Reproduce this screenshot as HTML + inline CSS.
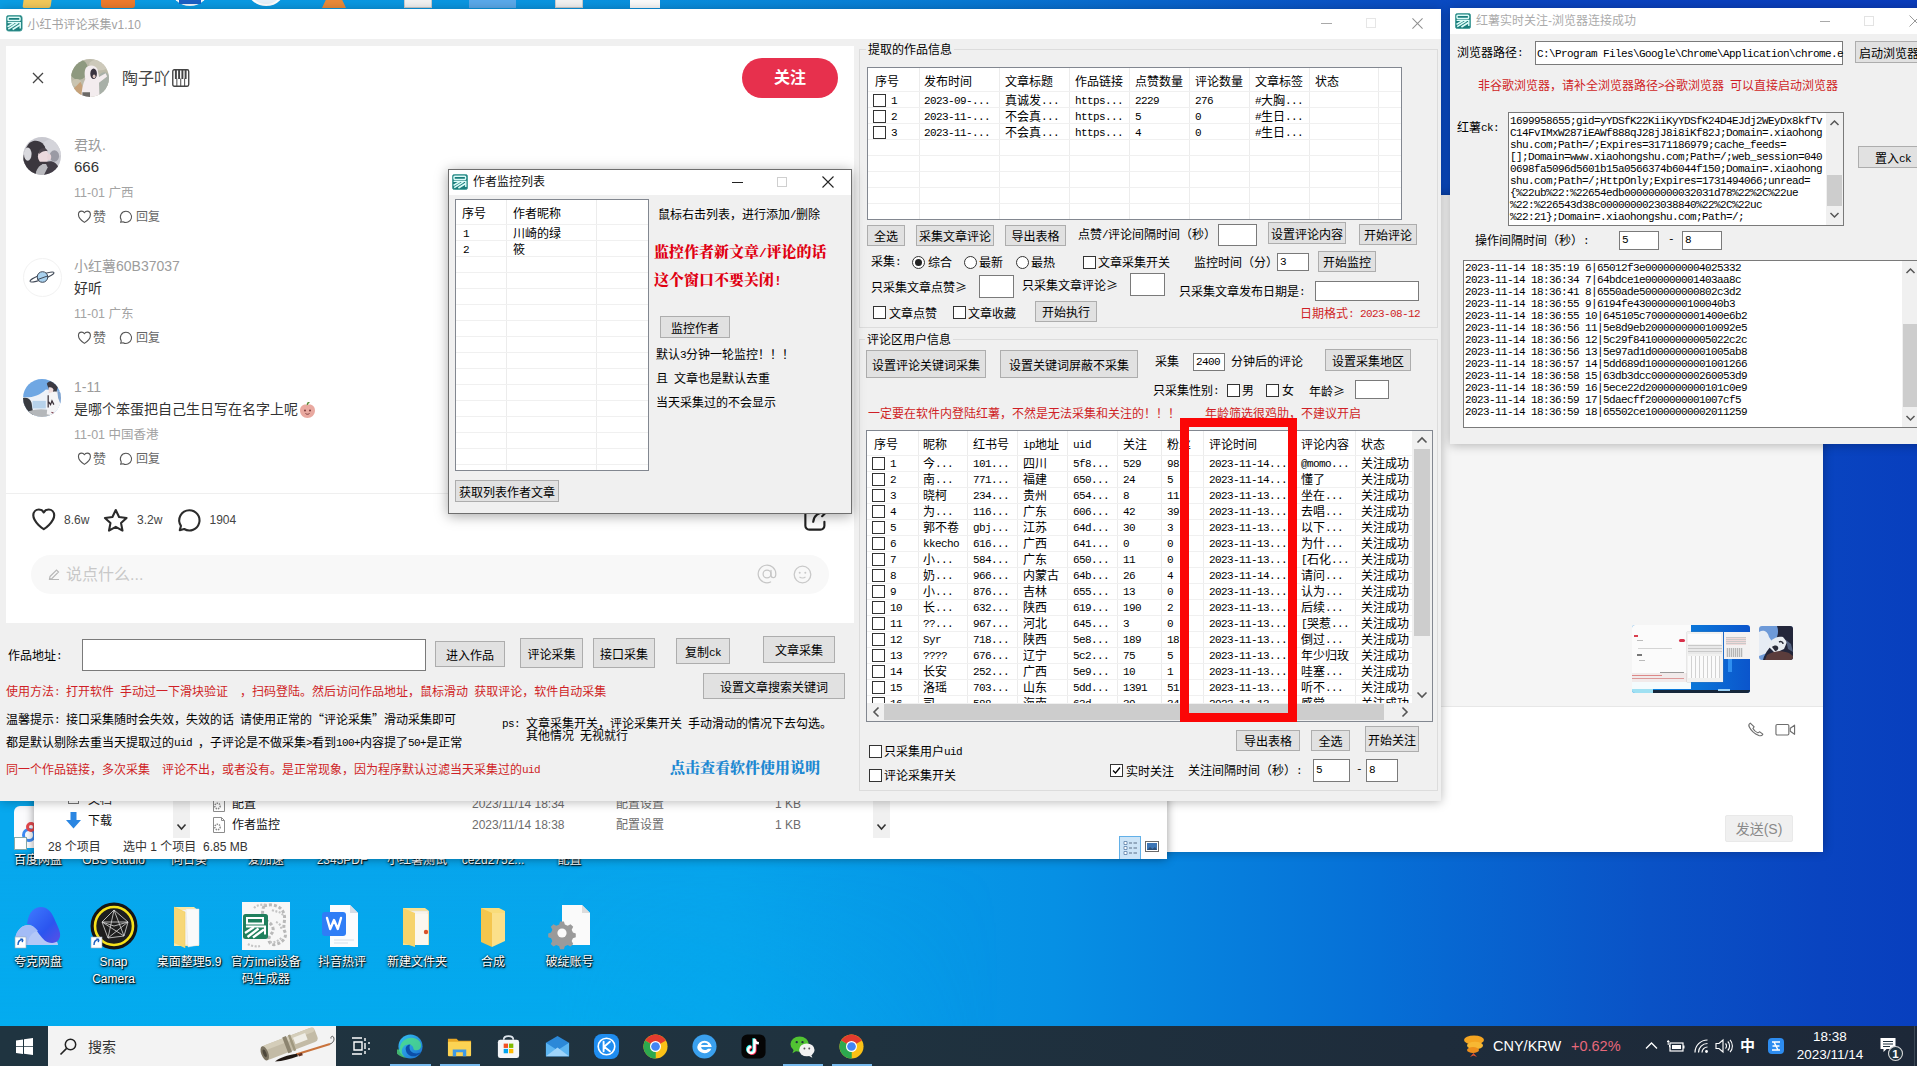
<!DOCTYPE html>
<html lang="zh-CN"><head><meta charset="utf-8"><title>screenshot</title>
<style>
html,body{margin:0;padding:0}
body{width:1917px;height:1066px;overflow:hidden;position:relative;background:#0a8fe2;font-family:"Liberation Sans","Noto Sans CJK SC",sans-serif}
.a{position:absolute}
.t{position:absolute;white-space:nowrap;font:400 12px/16px "Liberation Sans","Noto Sans CJK SC",sans-serif;color:#000}
.s{position:absolute;white-space:nowrap;font:12px/16px "Liberation Sans","Noto Sans CJK SC",sans-serif;color:#333}
.m{position:absolute;white-space:pre;font:11px/12px "Liberation Mono",monospace;letter-spacing:-.6px;color:#000}
.r{color:#cf1f26}
.l{font-family:"Liberation Mono",monospace;font-size:11px;letter-spacing:-.6px;white-space:pre;position:relative;top:-1px}
.g{font-family:"Noto Sans CJK SC",sans-serif;display:inline-block;width:12px;text-align:center}
.btn{position:absolute;box-sizing:border-box;border:1px solid #adadad;background:#e1e1e1;text-align:center;white-space:nowrap;font:400 12px/16px "Liberation Sans","Noto Sans CJK SC",sans-serif;color:#000}
.inp{position:absolute;box-sizing:border-box;border:1px solid #7a7a7a;background:#fff;font:400 12px/16px "Liberation Sans","Noto Sans CJK SC",sans-serif;color:#000;overflow:hidden;white-space:nowrap}
.cb{position:absolute;box-sizing:border-box;width:13px;height:13px;border:1px solid #333;background:#fff}
.rd{position:absolute;box-sizing:border-box;width:13px;height:13px;border:1px solid #333;background:#fff;border-radius:50%}
.lv{position:absolute;box-sizing:border-box;border:1px solid #828790;background:#fff;overflow:hidden}
.win{position:absolute;background:#f0f0f0;box-shadow:0 1px 10px rgba(0,0,0,.28)}
.vl{position:absolute;width:1px;background:#ececec}
.hl{position:absolute;height:1px;background:#f0f0f0}
.dl{position:absolute;white-space:nowrap;font:12px/17px "Liberation Sans","Noto Sans CJK SC",sans-serif;color:#fff;text-align:center;text-shadow:1px 1px 1px rgba(0,0,0,.95),0 1px 3px rgba(0,0,0,.7),0 0 2px rgba(0,0,0,.5)}
</style></head>
<body>
<div class="a" style="left:0;top:0;width:1917px;height:1066px;background:linear-gradient(90deg,#07a8ee 0%,#07a4ec 38%,#0690e4 55%,#066fd6 72%,#0a52c6 86%,#0944c0 95%,#083fbe 100%)"></div>
<div class="a" style="left:0;top:860px;width:1000px;height:206px;background:linear-gradient(180deg,rgba(0,176,240,0) 0%,rgba(0,176,240,.55) 100%);-webkit-mask-image:linear-gradient(90deg,#000 0%,#000 55%,transparent 100%);mask-image:linear-gradient(90deg,#000 0%,#000 55%,transparent 100%)"></div>
<div class="a" style="left:0;top:0;width:1917px;height:200px;background:linear-gradient(90deg,#0a9ee5 0%,#0a94e0 30%,#0879d3 50%,#0a52c4 70%,#0a44c0 80%,#0a3cbc 100%)"></div>
<div class="a" style="left:24px;top:-14px;width:28px;height:22px;background:#f3c95a;border-radius:2px;transform:skewX(-8deg)"></div>
<div class="a" style="left:101px;top:-16px;width:34px;height:24px;background:#ee7b2c;border-radius:3px"></div>
<div class="a" style="left:170px;top:-34px;width:40px;height:40px;background:#f4f6fa;border-radius:50%"></div><div class="a" style="left:179px;top:0;width:22px;height:4px;background:#1c5fc4"></div>
<div class="a" style="left:246px;top:-34px;width:40px;height:40px;background:#e8f1fa;border-radius:50%;border:2px solid #fff;box-sizing:border-box"></div>
<div class="a" style="left:322px;top:-10px;width:24px;height:18px;background:#e98a3a;clip-path:polygon(35% 0,65% 0,100% 100%,0 100%)"></div>
<div class="a" style="left:404px;top:-12px;width:28px;height:20px;background:#f2f2f2;border:1px solid #ccc;box-sizing:border-box"></div>
<div class="a" style="left:469px;top:-30px;width:47px;height:38px;background:#5aa9ea"></div>
<div class="a" style="left:555px;top:-12px;width:28px;height:20px;background:#f2f2f2;border:1px solid #ccc;box-sizing:border-box"></div>
<div class="a" style="left:630px;top:-12px;width:30px;height:20px;background:#fafafa"></div>
<div class="a" style="left:14px;top:806px;width:30px;height:42px;background:#fbfbfd;border-radius:6px"></div>
<div class="a" style="left:22px;top:828px;width:14px;height:14px;border:3px solid #3d8af2;border-radius:50%;box-sizing:border-box"></div>
<div class="a" style="left:26px;top:822px;width:10px;height:10px;border:3px solid #e5484d;border-radius:50%;box-sizing:border-box"></div>
<div class="a" style="left:14px;top:837px;width:11px;height:11px;background:#fff;border:1px solid #8aa"></div>
<div class="dl" style="left:-22px;width:120px;top:852px">百度网盘</div>
<div class="dl" style="left:53.5px;width:120px;top:852px">OBS Studio</div>
<div class="dl" style="left:129px;width:120px;top:852px">向日葵</div>
<div class="dl" style="left:205.8px;width:120px;top:852px">爱加速</div>
<div class="dl" style="left:282px;width:120px;top:852px">2345PDF</div>
<div class="dl" style="left:357px;width:120px;top:852px">小红薯测试</div>
<div class="dl" style="left:433px;width:120px;top:852px">ce2d2752...</div>
<div class="dl" style="left:509.6px;width:120px;top:852px">配置</div>
<svg class="a" style="left:14px;top:902px" width="48" height="48" viewBox="0 0 48 48"><defs><linearGradient id="qk" x1="0" y1="0" x2="1" y2="1"><stop offset="0" stop-color="#3f7bff"/><stop offset=".6" stop-color="#2b55ef"/><stop offset="1" stop-color="#5a4fe6"/></linearGradient></defs><path d="M9 43c-6 0-9-5-7-10 2-6 7-10 12-10 5 0 8 3 12 8 3 4 7 7 12 7 4 0 6 2 6 5z" fill="#b3c8f7"/><path d="M14 17c2-8 7-12 13-12 6 0 10 4 13 11 2 5 5 10 6 15 1 6-3 10-8 10-6 0-9-4-13-9-4-6-7-10-12-10z" fill="url(#qk)"/><path d="M9 43c-6 0-9-5-7-10 2-6 7-10 12-10 4 0 7 2 10 6-6 1-10 6-10 14z" fill="#a3bcf6"/><rect x="1" y="35" width="11" height="11" fill="#fff" stroke="#9ab" stroke-width=".6"/><path d="M4 43c0-4 2-5.5 5-5.5M9 37.5l-2.6-.6M9 37.5l-.8 2.6" stroke="#1b5fc0" stroke-width="1.4" fill="none"/></svg>
<svg class="a" style="left:89.5px;top:902px" width="48" height="48" viewBox="0 0 48 48"><circle cx="24" cy="24" r="23.5" fill="#151515"/><circle cx="24" cy="24" r="19" fill="#1e1e1e" stroke="#f6e21c" stroke-width="2.6"/><path d="M24 8 12 20l6 16 16-2 4-14zM24 8l-6 28M24 8l10 26M12 20l26 0M12 20l22 14M38 20 18 36M24 24l-12-4M24 24l14-4" stroke="#d8d8d8" stroke-width=".8" fill="none"/><rect x="1" y="35" width="11" height="11" fill="#fff" stroke="#9ab" stroke-width=".6"/><path d="M4 43c0-4 2-5.5 5-5.5M9 37.5l-2.6-.6M9 37.5l-.8 2.6" stroke="#1b5fc0" stroke-width="1.4" fill="none"/></svg>
<svg class="a" style="left:165px;top:902px" width="48" height="48" viewBox="0 0 48 48"><path d="M9 5h20l3 2.500h2V44H9z" fill="#f9e7a4"/><path d="M17 8h16l1 33-15 2z" fill="#f3f3f3"/><path d="M21 7h13v36l-11 2z" fill="#fafafa" stroke="#e3e3e3" stroke-width=".500"/><path d="M9 5l11 5v36L9 41z" fill="#f7d777"/><path d="M9 5l11 5v36" fill="none" stroke="#f3cc60" stroke-width=".600"/></svg>
<svg class="a" style="left:241.8px;top:902px" width="48" height="48" viewBox="0 0 48 48"><rect x="0" y="0" width="48" height="48" fill="#f7f7f7"/><path d="M22 4c8-3 18 0 20 8 2 7-2 12 1 18 2 5-2 10-8 12-5 2-9-1-8-6 1-4 5-5 4-10-1-6-8-6-10-12-1-4 0-8 1-10z" fill="none" stroke="#b9b9b9" stroke-width="3" stroke-dasharray="3 2"/><path d="M30 8c4 2 8 1 11 5M34 20c3 1 6 4 5 8M28 40c4 1 9-1 12-5M12 6c3-3 8-4 12-3M6 42c3 2 8 3 12 2" fill="none" stroke="#c4c4c4" stroke-width="2.200" stroke-dasharray="2 1.500"/><rect x="1" y="12" width="25" height="25" rx="2.500" fill="#1f7f5c"/><path d="M5 16h16v5.500H5z" fill="none" stroke="#fff" stroke-width="2"/><path d="M3 31l9-6M5.500 35l11-8.500M11 35.500l11-8" stroke="#fff" stroke-width="2.300"/><path d="M4 24.500h19v8" fill="none" stroke="#fff" stroke-width="2"/></svg>
<svg class="a" style="left:318px;top:902px" width="48" height="48" viewBox="0 0 48 48"><path d="M12 3h20l8 8v34H12z" fill="#fbfcfe"/><path d="M32 3v8h8z" fill="#d7dde6"/><rect x="4" y="10" width="24" height="24" rx="3" fill="#2f7df6"/><path d="M9 16l3.2 11 3.8-9 3.8 9L23 16" fill="none" stroke="#fff" stroke-width="2.4" stroke-linejoin="round" stroke-linecap="round"/><path d="M16 38h20M16 41h14" stroke="#e3e8ef" stroke-width="1.4"/></svg>
<svg class="a" style="left:393px;top:902px" width="48" height="48" viewBox="0 0 48 48"><path d="M10 6h22l4 3v34H10z" fill="#f8e08e"/><path d="M16 9h19v33H16z" fill="#f7f3ea" stroke="#ddd" stroke-width=".6"/><path d="M10 6l12 5v34l-12-4z" fill="#f6d36b"/><path d="M22 12h13v31H22z" fill="#fbf7ee"/><circle cx="33" cy="30" r="2.2" fill="#d9532c"/></svg>
<svg class="a" style="left:469px;top:902px" width="48" height="48" viewBox="0 0 48 48"><path d="M12 6h18l6 3v30H12z" fill="#f9dc7a"/><path d="M12 6l11 5v34l-11-5z" fill="#f4c64e"/><path d="M23 11h13v28l-13 6z" fill="#fbe08a"/></svg>
<svg class="a" style="left:545.6px;top:902px" width="48" height="48" viewBox="0 0 48 48"><path d="M16 3h20l8 8v32H16z" fill="#fafafa"/><path d="M36 3v8h8z" fill="#dcdcdc"/><g transform="translate(16 31)"><path d="M-2-12h4l1 3 3 1.3 3-1.6 2.8 2.8-1.6 3 1.3 3 3 1v4l-3 1-1.3 3 1.6 3-2.8 2.8-3-1.6-3 1.3-1 3h-4l-1-3-3-1.3-3 1.6-2.8-2.8 1.6-3-1.3-3-3-1v-4l3-1 1.3-3-1.6-3 2.8-2.8 3 1.6 3-1.3z" fill="#9a9a9a" transform="scale(.95)"/><circle r="4.6" fill="#fafafa"/></g></svg>
<div class="dl" style="left:-22px;width:120px;top:954px;line-height:16px">夸克网盘</div>
<div class="dl" style="left:53.5px;width:120px;top:954px;line-height:16px">Snap</div>
<div class="dl" style="left:53.5px;width:120px;top:970.5px;line-height:16px">Camera</div>
<div class="dl" style="left:129px;width:120px;top:954px;line-height:16px">桌面整理5.9</div>
<div class="dl" style="left:205.8px;width:120px;top:954px;line-height:16px">官方imei设备</div>
<div class="dl" style="left:205.8px;width:120px;top:970.5px;line-height:16px">码生成器</div>
<div class="dl" style="left:282px;width:120px;top:954px;line-height:16px">抖音热评</div>
<div class="dl" style="left:357px;width:120px;top:954px;line-height:16px">新建文件夹</div>
<div class="dl" style="left:433px;width:120px;top:954px;line-height:16px">合成</div>
<div class="dl" style="left:509.6px;width:120px;top:954px;line-height:16px">破绽账号</div>
<div class="a" style="left:1100px;top:195px;width:723px;height:656px;background:#f5f5f5;box-shadow:0 0 10px rgba(0,0,0,.3)">
<div class="a" style="left:0;top:511px;width:723px;height:146px;background:#fff;border-top:1px solid #e7e7e7;box-sizing:border-box"></div>
</div>
<div class="a" style="left:1632px;top:625px;width:118px;height:68px;border-radius:3px;overflow:hidden;background:linear-gradient(90deg,#0a86e0 0,#0a74d8 55%,#0b55cc 100%)"><div class="a" style="left:96px;top:33px;width:4px;height:14px;background:#2f8ff0"></div><div class="a" style="left:0;top:0;width:59px;height:64px;background:#fbfbfb"></div><div class="a" style="left:0;top:48px;width:59px;height:9px;background:#f1eaea"></div><div class="a" style="left:2px;top:10px;width:4px;height:2px;background:#d9404f"></div><div class="a" style="left:47px;top:14px;width:6px;height:3px;background:#d9304a;border-radius:2px"></div><div class="a" style="left:6px;top:23px;width:34px;height:1px;background:#d5d5d5"></div><div class="a" style="left:5px;top:15px;width:6px;height:1px;background:#bbb"></div><div class="a" style="left:5px;top:29px;width:5px;height:2px;background:#777"></div><div class="a" style="left:7px;top:35px;width:6px;height:1px;background:#bbb"></div><div class="a" style="left:0;top:50px;width:30px;height:1px;background:#d88"></div><div class="a" style="left:0;top:53px;width:52px;height:1px;background:#d99"></div><div class="a" style="left:28px;top:47px;width:24px;height:1px;background:#999"></div><div class="a" style="left:0;top:57px;width:59px;height:7px;background:#f4fbfd"></div><div class="a" style="left:55px;top:7px;width:36px;height:50px;background:#f1f1f0;box-shadow:0 0 1px #888"></div><div class="a" style="left:56px;top:9px;width:33px;height:10px;background:#fcfcfc"></div><div class="a" style="left:56px;top:20px;width:34px;height:9px;background:repeating-linear-gradient(0deg,#e9e9e9 0 2px,#c9c9c9 2px 3px)"></div><div class="a" style="left:56px;top:31px;width:32px;height:22px;background:repeating-linear-gradient(90deg,#fbfbfb 0 3px,#d2d2d2 3px 4px)"></div><div class="a" style="left:92px;top:7px;width:26px;height:27px;background:#f3f1f1"></div><div class="a" style="left:94px;top:12px;width:20px;height:8px;background:repeating-linear-gradient(0deg,#f0d9d9 0 1px,#c9c9c9 1px 2px)"></div><div class="a" style="left:94px;top:23px;width:17px;height:9px;background:repeating-linear-gradient(90deg,#e2e2e2 0 1px,#b5b5b5 1px 2px)"></div><div class="a" style="left:0;top:64px;width:21px;height:4px;background:#9fe0f2"></div><div class="a" style="left:21px;top:65px;width:97px;height:3px;background:#15263a"></div><div class="a" style="left:86px;top:64px;width:12px;height:2px;background:#9ad0f5"></div></div>
<svg class="a" style="left:1759px;top:626px" width="34" height="34" viewBox="0 0 34 34"><defs><clipPath id="cw"><rect width="34" height="34" rx="3"/></clipPath></defs><g clip-path="url(#cw)"><rect width="34" height="34" fill="#6e9ad8"/><path d="M0 6c5-3 9 0 10 5l4 6-6 10-8 3z" fill="#e6ecf4"/><path d="M18 0h16v34H4c2-8 8-14 12-18 3-6 4-11 2-16z" fill="#23263a"/><path d="M9 20c2-6 8-10 15-9l4 5-3 7-9 4z" fill="#e9edf1"/><path d="M13 21c2-2 5-2 6 0s-1 4-3 4z" fill="#2a2c38"/><path d="M20 16c2-1 4 0 4 2" stroke="#2a2c38" stroke-width="1.500" fill="none"/><path d="M8 29c6-4 14-5 22-2l4 3v4H6z" fill="#5b3d3c"/><path d="M27 14l5 4 2 8-5-3z" fill="#54617e"/></g></svg>
<svg class="a" style="left:1745.5px;top:720.5px" width="19" height="17" viewBox="0 0 20 20" preserveAspectRatio="none"><path d="M4.500 2.500c-1.500 1-2 2.500-1 4.500 2 4.500 5.500 8 10 10 2 .8 3.500 0 4.200-1.500l-3.200-2.800-2 1.300c-2-1-4.200-3.200-5.200-5.200l1.300-2z" fill="none" stroke="#6e6e6e" stroke-width="1.200" stroke-linejoin="round"/></svg>
<svg class="a" style="left:1775px;top:721.5px" width="21" height="15.5" viewBox="0 0 22 16"><rect x="1" y="2.500" width="13.500" height="11" rx="1.300" fill="none" stroke="#6e6e6e" stroke-width="1.200"/><path d="M16 6.500 20.500 3.200v9.600L16 9.500z" fill="none" stroke="#6e6e6e" stroke-width="1.200" stroke-linejoin="round"/></svg>
<div class="a" style="left:1725px;top:815px;width:68px;height:27px;background:#f0f0f0;border:1px solid #e9e9e9;box-sizing:border-box;border-radius:2px"></div>
<div class="s" style="left:1725px;width:68px;text-align:center;top:818.5px;font-size:14px;line-height:20px;color:#8a8a8a">发送(S)</div>
<div class="a" style="left:34px;top:600px;width:1133px;height:259px;background:#fff;box-shadow:0 0 9px rgba(0,0,0,.4)"></div>
<div class="a" style="left:173px;top:780px;width:17px;height:58px;background:#f0f0f0"></div>
<svg class="a" style="left:176px;top:823px" width="11" height="8" viewBox="0 0 11 8"><path d="M1.500 1.500 5.500 6l4-4.500" fill="none" stroke="#333" stroke-width="1.600"/></svg>
<div class="a" style="left:873px;top:780px;width:17px;height:58px;background:#f0f0f0"></div>
<svg class="a" style="left:876px;top:823px" width="11" height="8" viewBox="0 0 11 8"><path d="M1.500 1.500 5.500 6l4-4.500" fill="none" stroke="#333" stroke-width="1.600"/></svg>
<div class="a" style="left:68px;top:797px;width:11px;height:7px;border:1px solid #777;border-top:none;box-sizing:border-box"></div>
<div class="s" style="left:88px;top:792px;color:#222">文档</div>
<svg class="a" style="left:65px;top:812px" width="17" height="18" viewBox="0 0 17 18"><path d="M5.500 0h6v8h4.500L8.500 16.500 1 8h4.500z" fill="#2a86e2"/><path d="M2 17h13" stroke="#2a86e2" stroke-width="0"/></svg>
<div class="s" style="left:88px;top:812.5px;color:#111">下载</div>
<svg class="a" style="left:212px;top:796px" width="14" height="16" viewBox="0 0 14 16"><path d="M1.500.500h8l3 3v12h-11z" fill="#fff" stroke="#8c8c8c"/><path d="M9.500.500v3h3" fill="none" stroke="#8c8c8c"/><circle cx="5.500" cy="10" r="2.700" fill="none" stroke="#8a8a8a" stroke-width="1.500" stroke-dasharray="1.400 .9"/></svg>
<div class="s" style="left:232px;top:796px;color:#111">配置</div>
<div class="s" style="left:472px;top:796px;color:#6d6d6d">2023/11/14 18:34</div>
<div class="s" style="left:616px;top:796px;color:#6d6d6d">配置设置</div>
<div class="s" style="left:775px;top:796px;color:#6d6d6d">1 KB</div>
<svg class="a" style="left:212px;top:816.5px" width="14" height="16" viewBox="0 0 14 16"><path d="M1.500.500h8l3 3v12h-11z" fill="#fff" stroke="#8c8c8c"/><path d="M9.500.500v3h3" fill="none" stroke="#8c8c8c"/><circle cx="5.500" cy="10" r="2.700" fill="none" stroke="#8a8a8a" stroke-width="1.500" stroke-dasharray="1.400 .9"/></svg>
<div class="s" style="left:232px;top:816.5px;color:#111">作者监控</div>
<div class="s" style="left:472px;top:816.5px;color:#6d6d6d">2023/11/14 18:38</div>
<div class="s" style="left:616px;top:816.5px;color:#6d6d6d">配置设置</div>
<div class="s" style="left:775px;top:816.5px;color:#6d6d6d">1 KB</div>
<div class="s" style="left:48px;top:839px;color:#333">28 个项目</div>
<div class="s" style="left:123px;top:839px;color:#333;white-space:pre">选中 1 个项目  6.85 MB</div>
<div class="a" style="left:1119px;top:836px;width:22px;height:23px;box-sizing:border-box;border:1px solid #62b0e8;border-bottom:none;background:#cce4f7"></div>
<svg class="a" style="left:1123px;top:840.5px" width="15" height="14" viewBox="0 0 14 14"><path d="M.500.500h3v3h-3zM.500 5.500h3v3h-3zM.500 10.500h3v3h-3z" fill="#fff" stroke="#5a7fa8" stroke-width=".8"/><path d="M5.500 2h3M10 2h3.500M5.500 7h3M10 7h3.500M5.500 12h3M10 12h3.500" stroke="#5a6f88" stroke-width="1.200"/></svg>
<svg class="a" style="left:1145px;top:841px" width="14" height="11" viewBox="0 0 14 11"><rect x=".500" y=".500" width="13" height="10" fill="#fff" stroke="#6a6a6a"/><rect x="2" y="2" width="10" height="7" fill="#3c75b5"/><path d="M2 9l3-3 2.500 2L10 6l2 3z" fill="#1d2a38" opacity=".5"/></svg>
<div class="win" style="left:0;top:9px;width:1441px;height:792px"></div>
<div class="a" style="left:0;top:9px;width:1441px;height:30px;background:#fff"></div>
<svg class="a" style="left:6px;top:15px" width="16.5" height="16.5" viewBox="0 0 16 16"><rect x=".4" y=".4" width="15.2" height="15.2" rx="2.2" fill="#1b7e7c" stroke="#3d9a96" stroke-width=".8"/><rect x="2" y="2.3" width="11.6" height="3.1" rx=".8" fill="none" stroke="#dcfcf8" stroke-width="1.45"/><path d="M1.6 7.4h12.2v5.6" fill="none" stroke="#dcfcf8" stroke-width="1.4"/><path d="M7.6 7.8 1.5 11.4M11.4 7.8 2.2 13.7M13.6 9.5 6.4 14" fill="none" stroke="#dcfcf8" stroke-width="1.6"/></svg>
<div class="s" style="left:27.5px;top:16.5px;color:#a2a2a2;font-size:12px">小红书评论采集v1.10</div>
<div class="a" style="left:1321px;top:23px;width:11px;height:1px;background:#a9a9a9"></div>
<div class="a" style="left:1366px;top:18px;width:10px;height:10px;box-sizing:border-box;border:1px solid #e6e6e6"></div>
<svg class="a" style="left:1411.5px;top:17.5px" width="11" height="11" viewBox="0 0 12 12"><path d="M.500.500l11 11M11.500.500l-11 11" stroke="#8f8f8f" stroke-width="1.100"/></svg>
<div class="a" style="left:6px;top:46px;width:848px;height:577px;background:#fff"></div>
<svg class="a" style="left:32px;top:72px" width="12" height="12" viewBox="0 0 12 12"><path d="M1 1l10 10M11 1 1 11" stroke="#444" stroke-width="1.300"/></svg>
<svg class="a" style="left:71px;top:59px" width="38" height="38" viewBox="0 0 40 40"><defs><clipPath id="cA"><circle cx="20" cy="20" r="20"/></clipPath></defs><g clip-path="url(#cA)"><rect width="40" height="40" fill="#bcbaa9"/><ellipse cx="8" cy="11" rx="10" ry="11" fill="#8e997f"/><ellipse cx="35" cy="27" rx="8" ry="13" fill="#a8b0a8"/><ellipse cx="30" cy="6" rx="11" ry="6" fill="#cdc9ba"/><ellipse cx="6" cy="25" rx="5" ry="4" fill="#c9c4b0"/><path d="M3 31l7-7 4 9-4 8z" fill="#c6a27a"/><path d="M16 9c3-3.500 10-3 12 2l1.500 8 7-4 1.500 3.500-8.500 6.500.5 17H11c0-8 1-15 4-21-1-4.500-1-9 1-12z" fill="#f3ecee"/><ellipse cx="23.800" cy="15.500" rx="3.500" ry="5.600" fill="#3a343f"/><ellipse cx="24.300" cy="18.200" rx="1.500" ry="2" fill="#dcc6c0"/><rect x="12" y="35" width="8" height="5" fill="#6c6966"/></g></svg>
<div class="s" style="left:122px;top:67.5px;line-height:22px;font-size:16px;color:#444">陶子吖</div>
<svg class="a" style="left:172px;top:69px" width="17.5" height="18" viewBox="0 0 18 17" preserveAspectRatio="none"><rect x=".800" y=".800" width="16.400" height="15.400" rx="1.500" fill="#fff" stroke="#444" stroke-width="1.400"/><path d="M5 9v7M9 9v7M13 9v7" stroke="#444" stroke-width="1"/><path d="M4 1v8.500M7.300 1v8.500M10.700 1v8.500M14 1v8.500" stroke="#444" stroke-width="2"/></svg>
<div class="a" style="left:742px;top:58px;width:96px;height:40px;border-radius:20px;background:#e7304d"></div>
<div class="s" style="left:742px;width:96px;top:67px;text-align:center;font-size:16px;line-height:22px;font-weight:bold;color:#fff">关注</div>
<svg class="a" style="left:23px;top:136.7px" width="38" height="38" viewBox="0 0 40 40"><defs><clipPath id="cB"><circle cx="20" cy="20" r="20"/></clipPath></defs><g clip-path="url(#cB)"><rect width="40" height="40" fill="#c9c9d0"/><ellipse cx="31" cy="12" rx="12" ry="10" fill="#d4d4da"/><ellipse cx="33" cy="20" rx="5" ry="6" fill="#9a9aa4"/><path d="M7 6c7-5 16-1 17 8l-3 14-7 12H2C-2 28 0 14 7 6z" fill="#3b373e"/><ellipse cx="5" cy="18" rx="4" ry="7" fill="#d9d9de"/><ellipse cx="21.500" cy="20.500" rx="5.800" ry="7" fill="#ebd9dd"/><path d="M17 14c3-4 8-3 9 1-3-1-6 0-9 3z" fill="#4a434b"/><ellipse cx="27.500" cy="21" rx="2.200" ry="3.200" fill="#e8d4d8"/><path d="M24 27c5-3 11-1 14 6l-4 7H22z" fill="#423d46"/><path d="M14 36c2-5 6-8 10-8l2 4-4 8h-9z" fill="#b9b9be"/><path d="M17 26h9v2.500h-9z" fill="#3f3940"/></g></svg>
<div class="s" style="left:74px;top:135px;line-height:20px;font-size:14px;color:#9c9c9c">君玖.</div>
<div class="s" style="left:74px;top:156.8px;line-height:20px;font-size:15px;color:#333">666</div>
<div class="s" style="left:74px;top:183.5px;line-height:18px;font-size:12.500px;color:#a3a3a3">11-01 广西</div>
<svg class="a" style="left:75.6px;top:207.9px" width="16.85" height="16.85" viewBox="0 0 24 24" stroke="#555" stroke-width="1.6"><path d="M12 20.500S3.500 15 3.500 9.200C3.500 6.500 5.500 4.500 8 4.500c1.700 0 3.200.9 4 2.300.8-1.400 2.300-2.300 4-2.300 2.500 0 4.500 2 4.500 4.700C20.500 15 12 20.500 12 20.500z" fill="none" stroke-linejoin="round"/></svg>
<div class="s" style="left:93px;top:208px;line-height:18px;font-size:13px;color:#666">赞</div>
<svg class="a" style="left:118px;top:208.85px" width="15.8" height="15.8" viewBox="0 0 24 24" stroke="#555" stroke-width="1.6"><path d="M12 3.500a8.500 8.500 0 1 1-4.300 15.800L4 20.300l1-3.600A8.500 8.500 0 0 1 12 3.500z" fill="none" stroke-linejoin="round"/></svg>
<div class="s" style="left:136px;top:208px;line-height:18px;font-size:12px;color:#666">回复</div>
<div class="a" style="left:22.500px;top:257.5px;width:39px;height:39px;border-radius:50%;background:#fff;border:1px solid #f2f2f2;box-sizing:border-box"></div>
<svg class="a" style="left:27px;top:266.2px" width="30" height="22" viewBox="0 0 30 22"><ellipse cx="15" cy="11" rx="12.800" ry="2.300" fill="#fff" stroke="#3f4856" stroke-width="1" transform="rotate(-20 15 11)"/><circle cx="15.500" cy="11" r="5.300" fill="#a9d1ee" stroke="#3f4856" stroke-width="1"/><path d="M10.500 13.600 21 9.800" stroke="#3f4856" stroke-width="1"/></svg>
<div class="s" style="left:74px;top:256px;line-height:20px;font-size:14px;color:#9c9c9c">小红薯60B37037</div>
<div class="s" style="left:74px;top:277.8px;line-height:20px;font-size:14px;color:#333">好听</div>
<div class="s" style="left:74px;top:304.5px;line-height:18px;font-size:12.500px;color:#a3a3a3">11-01 广东</div>
<svg class="a" style="left:75.6px;top:328.9px" width="16.85" height="16.85" viewBox="0 0 24 24" stroke="#555" stroke-width="1.6"><path d="M12 20.500S3.500 15 3.500 9.200C3.500 6.500 5.500 4.500 8 4.500c1.700 0 3.200.9 4 2.300.8-1.400 2.300-2.300 4-2.300 2.500 0 4.500 2 4.500 4.700C20.500 15 12 20.500 12 20.500z" fill="none" stroke-linejoin="round"/></svg>
<div class="s" style="left:93px;top:329px;line-height:18px;font-size:13px;color:#666">赞</div>
<svg class="a" style="left:118px;top:329.85px" width="15.8" height="15.8" viewBox="0 0 24 24" stroke="#555" stroke-width="1.6"><path d="M12 3.500a8.500 8.500 0 1 1-4.300 15.800L4 20.300l1-3.600A8.500 8.500 0 0 1 12 3.500z" fill="none" stroke-linejoin="round"/></svg>
<div class="s" style="left:136px;top:329px;line-height:18px;font-size:12px;color:#666">回复</div>
<svg class="a" style="left:23px;top:378.7px" width="38" height="38" viewBox="0 0 40 40"><defs><clipPath id="cD"><circle cx="20" cy="20" r="20"/></clipPath></defs><g clip-path="url(#cD)"><rect width="40" height="40" fill="#6fa7e3"/><path d="M0 19c8 1 17-1 24-8l16 2v27H0z" fill="#eef2f8"/><path d="M0 20c4-1 8 1 9 5l2 13-7 2H0z" fill="#393b40"/><rect x="10" y="23" width="14" height="8" fill="#b7d2ea"/><path d="M6 34c8-3 18-3 27 0v6H6z" fill="#b4b7ba"/><path d="M25 5c3-5 11-3 12 3l-2 6-7-1z" fill="#3c3a42"/><path d="M27 9c2-1 4 0 5 2l-1 6-4-1z" fill="#efdcdc"/><path d="M27 15l7-2 5 6 1 14-6 6-9-2z" fill="#f4f4f6"/><path d="M26.500 17v13M27 24l2 3 1.500-4 2 4" stroke="#3a3038" stroke-width="1.300" fill="none"/><path d="M30 35l6 3 2-2" stroke="#7a3a48" stroke-width="1.200" fill="none"/><path d="M36 12l4 2v14l-3-8z" fill="#7fa3cf"/></g></svg>
<div class="s" style="left:74px;top:377px;line-height:20px;font-size:14px;color:#9c9c9c">1-11</div>
<div class="s" style="left:74px;top:398.8px;line-height:20px;font-size:14px;color:#333">是哪个笨蛋把自己生日写在名字上呢</div>
<div class="s" style="left:74px;top:425.5px;line-height:18px;font-size:12.500px;color:#a3a3a3">11-01 中国香港</div>
<svg class="a" style="left:75.6px;top:449.9px" width="16.85" height="16.85" viewBox="0 0 24 24" stroke="#555" stroke-width="1.6"><path d="M12 20.500S3.500 15 3.500 9.200C3.500 6.500 5.500 4.500 8 4.500c1.700 0 3.200.9 4 2.300.8-1.400 2.300-2.300 4-2.300 2.500 0 4.500 2 4.500 4.700C20.500 15 12 20.500 12 20.500z" fill="none" stroke-linejoin="round"/></svg>
<div class="s" style="left:93px;top:450px;line-height:18px;font-size:13px;color:#666">赞</div>
<svg class="a" style="left:118px;top:450.85px" width="15.8" height="15.8" viewBox="0 0 24 24" stroke="#555" stroke-width="1.6"><path d="M12 3.500a8.500 8.500 0 1 1-4.300 15.800L4 20.300l1-3.600A8.500 8.500 0 0 1 12 3.500z" fill="none" stroke-linejoin="round"/></svg>
<div class="s" style="left:136px;top:450px;line-height:18px;font-size:12px;color:#666">回复</div>
<svg class="a" style="left:299px;top:402px" width="17" height="17" viewBox="0 0 17 17"><path d="M8.500 3c4-1.500 7.500 1.500 7.500 5.500 0 4.500-3.500 7.500-7.500 7.500S1 13 1 8.500C1 4.500 4.500 1.500 8.500 3z" fill="#e9a9a0"/><path d="M8.500 3c-.3-1.500.5-2.500 2-2.800" stroke="#5b8c3a" stroke-width="1.400" fill="none"/><circle cx="6" cy="8.500" r="1" fill="#7a3a3a"/><circle cx="11" cy="8.500" r="1" fill="#7a3a3a"/><path d="M6.500 11.500c1.200 1 2.800 1 4 0" stroke="#7a3a3a" fill="none"/></svg>
<div class="a" style="left:6px;top:493px;width:442px;height:1px;background:#efefef"></div>
<svg class="a" style="left:29.25px;top:504.4px" width="29.5" height="29.5" viewBox="0 0 24 24" stroke="#2b2b2b" stroke-width="1.75"><path d="M12 20.500S3.500 15 3.500 9.200C3.500 6.500 5.500 4.500 8 4.500c1.700 0 3.200.9 4 2.300.8-1.400 2.300-2.300 4-2.300 2.500 0 4.500 2 4.500 4.700C20.500 15 12 20.500 12 20.500z" fill="none" stroke-linejoin="round"/></svg>
<div class="s" style="left:64px;top:511px;line-height:18px;font-size:12px;color:#444">8.6w</div>
<svg class="a" style="left:101.35px;top:505.7px" width="29.5" height="29.5" viewBox="0 0 24 24" stroke="#2b2b2b" stroke-width="1.7"><path d="M12 3.300l2.700 5.600 6.100.8-4.500 4.200 1.200 6.100L12 17l-5.500 3 1.200-6.100L3.200 9.700l6.100-.8z" fill="none" stroke-linejoin="round"/></svg>
<div class="s" style="left:137px;top:511px;line-height:18px;font-size:12px;color:#444">3.2w</div>
<svg class="a" style="left:174.6px;top:505.7px" width="28.6" height="28.6" viewBox="0 0 24 24" stroke="#2b2b2b" stroke-width="1.75"><path d="M12 3.500a8.500 8.500 0 1 1-4.300 15.800L4 20.300l1-3.600A8.500 8.500 0 0 1 12 3.500z" fill="none" stroke-linejoin="round"/></svg>
<div class="s" style="left:209.5px;top:511px;line-height:18px;font-size:12px;color:#444">1904</div>
<svg class="a" style="left:802px;top:505.3px" width="28" height="28" viewBox="0 0 25 25"><path d="M11 5H6.500A3.500 3.500 0 0 0 3 8.500v10A3.500 3.500 0 0 0 6.500 22h10a3.500 3.500 0 0 0 3.500-3.500V15" fill="none" stroke="#222" stroke-width="1.900" stroke-linecap="round"/><path d="M10 15c.5-5 4-8.500 11.500-9M17 2.500 22 6l-4 4" fill="none" stroke="#222" stroke-width="1.900" stroke-linecap="round" stroke-linejoin="round"/></svg>
<div class="a" style="left:31px;top:554.500px;width:798px;height:39px;border-radius:20px;background:#f8f8f8"></div>
<svg class="a" style="left:48px;top:567px" width="13" height="13" viewBox="0 0 13 13"><path d="M2 9.500 8.500 3l2 2L4 11.500l-2.500.500zM1 12.500h10" fill="none" stroke="#b8b8b8" stroke-width="1.200"/></svg>
<div class="s" style="left:66px;top:563.5px;line-height:22px;font-size:16px;color:#c8c8c8">说点什么...</div>
<svg class="a" style="left:756.5px;top:564px" width="20" height="20" viewBox="0 0 20 20"><path d="M13.6 18A8.800 8.800 0 1 1 18.800 10c0 2.400-.9 3.700-2.500 3.700-1.500 0-2.300-1-2.300-2.600V6.300" fill="none" stroke="#c6c6c6" stroke-width="1.250" stroke-linecap="round"/><circle cx="10" cy="10" r="3.900" fill="none" stroke="#c6c6c6" stroke-width="1.250"/></svg>
<svg class="a" style="left:792.5px;top:564.5px" width="19" height="19" viewBox="0 0 19 19"><circle cx="9.500" cy="9.500" r="8.300" fill="none" stroke="#c9c9c9" stroke-width="1.300"/><circle cx="6.700" cy="7.800" r="1" fill="#c9c9c9"/><circle cx="12.300" cy="7.800" r="1" fill="#c9c9c9"/><path d="M6.500 11.800c1.500 1.600 4.500 1.600 6 0" fill="none" stroke="#c9c9c9" stroke-width="1.200"/></svg>
<div class="t" style="left:8px;top:647.5px;">作品地址<span class="l">:</span></div>
<div class="inp" style="left:82px;top:639px;width:344px;height:32px;line-height:30px;padding-left:2px;"></div>
<div class="btn" style="left:435px;top:641px;width:70px;height:26px;line-height:26px;padding-top:1px;">进入作品</div>
<div class="btn" style="left:520px;top:638px;width:63px;height:30px;line-height:30px;padding-top:1px;">评论采集</div>
<div class="btn" style="left:593px;top:638px;width:62px;height:30px;line-height:30px;padding-top:1px;">接口采集</div>
<div class="btn" style="left:676px;top:638px;width:54px;height:26px;line-height:26px;padding-top:1px;">复制<span class="l">ck</span></div>
<div class="btn" style="left:763px;top:636px;width:72px;height:27px;line-height:27px;padding-top:1px;">文章采集</div>
<div class="btn" style="left:703px;top:673px;width:142px;height:26px;line-height:26px;padding-top:1px;">设置文章搜索关键词</div>
<div class="t r" style="left:6px;top:684px;white-space:pre">使用方法<span class="l">: </span>打开软件<span class="l"> </span>手动过一下滑块验证<span class="l">  </span>，扫码登陆。然后访问作品地址，鼠标滑动<span class="l"> </span>获取评论，软件自动采集</div>
<div class="t" style="left:6px;top:710.5px;">温馨提示<span class="l">: </span>接口采集随时会失效，失效的话<span class="l"> </span>请使用正常的<span class="g">“</span>评论采集<span class="g">”</span>滑动采集即可</div>
<div class="t" style="left:6px;top:734.5px;">都是默认剔除去重当天提取过的<span class="l">uid </span>，子评论是不做采集<span class="l">&gt;</span>看到<span class="l">100+</span>内容提了<span class="l">50+</span>是正常</div>
<div class="t r" style="left:6px;top:761.5px;white-space:pre">同一个作品链接，多次采集<span class="l">  </span>评论不出，或者没有。是正常现象，因为程序默认过滤当天采集过的<span class="l">uid</span></div>
<div class="t" style="left:502px;top:716px;"><span class="l">ps: </span>文章采集开关，评论采集开关<span class="l"> </span>手动滑动的情况下去勾选。</div>
<div class="t" style="left:526px;top:728px;">其他情况<span class="l"> </span>无视就行</div>
<div class="t" style="left:670px;top:758px;line-height:20px;font-size:15px;font-weight:900;color:#2088d2;font-family:'Liberation Serif','Noto Serif CJK SC',serif">点击查看软件使用说明</div>
<div class="a" style="left:859px;top:49px;width:579px;height:279px;box-sizing:border-box;border:1px solid #dcdcdc"></div>
<div class="a" style="left:866px;top:42px;width:88px;height:14px;background:#f0f0f0"></div>
<div class="t" style="left:868px;top:41.5px;">提取的作品信息</div>
<div class="lv" style="left:867px;top:67px;width:535px;height:153px"></div>
<div class="vl" style="left:919px;top:68px;height:151px"></div>
<div class="vl" style="left:999px;top:68px;height:151px"></div>
<div class="vl" style="left:1069px;top:68px;height:151px"></div>
<div class="vl" style="left:1129px;top:68px;height:151px"></div>
<div class="vl" style="left:1189px;top:68px;height:151px"></div>
<div class="vl" style="left:1249px;top:68px;height:151px"></div>
<div class="vl" style="left:1309px;top:68px;height:151px"></div>
<div class="vl" style="left:1378px;top:68px;height:151px"></div>
<div class="hl" style="left:868px;top:91px;width:533px"></div>
<div class="hl" style="left:868px;top:107px;width:533px"></div>
<div class="hl" style="left:868px;top:123px;width:533px"></div>
<div class="hl" style="left:868px;top:139px;width:533px"></div>
<div class="hl" style="left:868px;top:155px;width:533px"></div>
<div class="hl" style="left:868px;top:171px;width:533px"></div>
<div class="hl" style="left:868px;top:187px;width:533px"></div>
<div class="hl" style="left:868px;top:203px;width:533px"></div>
<div class="t" style="left:875px;top:73.5px;">序号</div>
<div class="t" style="left:924px;top:73.5px;">发布时间</div>
<div class="t" style="left:1005px;top:73.5px;">文章标题</div>
<div class="t" style="left:1075px;top:73.5px;">作品链接</div>
<div class="t" style="left:1135px;top:73.5px;">点赞数量</div>
<div class="t" style="left:1195px;top:73.5px;">评论数量</div>
<div class="t" style="left:1255px;top:73.5px;">文章标签</div>
<div class="t" style="left:1315px;top:73.5px;">状态</div>
<div class="cb" style="left:873px;top:94px"></div>
<div class="t" style="left:891px;top:93px;"><span class="l">1</span></div>
<div class="t" style="left:924px;top:93px;"><span class="l">2023-09-...</span></div>
<div class="t" style="left:1005px;top:93px;">真诚发<span class="l">...</span></div>
<div class="t" style="left:1075px;top:93px;"><span class="l">https...</span></div>
<div class="t" style="left:1135px;top:93px;"><span class="l">2229</span></div>
<div class="t" style="left:1195px;top:93px;"><span class="l">276</span></div>
<div class="t" style="left:1255px;top:93px;"><span class="l">#</span>大胸<span class="l">...</span></div>
<div class="cb" style="left:873px;top:110px"></div>
<div class="t" style="left:891px;top:109px;"><span class="l">2</span></div>
<div class="t" style="left:924px;top:109px;"><span class="l">2023-11-...</span></div>
<div class="t" style="left:1005px;top:109px;">不会真<span class="l">...</span></div>
<div class="t" style="left:1075px;top:109px;"><span class="l">https...</span></div>
<div class="t" style="left:1135px;top:109px;"><span class="l">5</span></div>
<div class="t" style="left:1195px;top:109px;"><span class="l">0</span></div>
<div class="t" style="left:1255px;top:109px;"><span class="l">#</span>生日<span class="l">...</span></div>
<div class="cb" style="left:873px;top:126px"></div>
<div class="t" style="left:891px;top:125px;"><span class="l">3</span></div>
<div class="t" style="left:924px;top:125px;"><span class="l">2023-11-...</span></div>
<div class="t" style="left:1005px;top:125px;">不会真<span class="l">...</span></div>
<div class="t" style="left:1075px;top:125px;"><span class="l">https...</span></div>
<div class="t" style="left:1135px;top:125px;"><span class="l">4</span></div>
<div class="t" style="left:1195px;top:125px;"><span class="l">0</span></div>
<div class="t" style="left:1255px;top:125px;"><span class="l">#</span>生日<span class="l">...</span></div>
<div class="btn" style="left:867px;top:225px;width:38px;height:21px;line-height:21px;padding-top:1px;">全选</div>
<div class="btn" style="left:916px;top:225px;width:78px;height:21px;line-height:21px;padding-top:1px;">采集文章评论</div>
<div class="btn" style="left:1005px;top:225px;width:61px;height:21px;line-height:21px;padding-top:1px;">导出表格</div>
<div class="t" style="left:1078px;top:226.5px;">点赞<span class="l">/</span>评论间隔时间（秒）</div>
<div class="inp" style="left:1218px;top:224px;width:39px;height:22px;line-height:20px;padding-left:2px;"></div>
<div class="btn" style="left:1268px;top:222px;width:78px;height:22px;line-height:22px;padding-top:1px;">设置评论内容</div>
<div class="btn" style="left:1359px;top:224px;width:58px;height:21px;line-height:21px;padding-top:1px;">开始评论</div>
<div class="t" style="left:871px;top:254px;">采集<span class="l">:</span></div>
<div class="rd" style="left:912px;top:255.5px"><div class="a" style="left:2px;top:2px;width:7px;height:7px;border-radius:50%;background:#222"></div></div>
<div class="t" style="left:928px;top:254.5px;">综合</div>
<div class="rd" style="left:963.5px;top:255.5px"></div>
<div class="t" style="left:979px;top:254.5px;">最新</div>
<div class="rd" style="left:1015.5px;top:255.5px"></div>
<div class="t" style="left:1031px;top:254.5px;">最热</div>
<div class="cb" style="left:1083px;top:255.5px"></div>
<div class="t" style="left:1098px;top:254.5px;">文章采集开关</div>
<div class="t" style="left:1194px;top:254.5px;">监控时间（分）</div>
<div class="inp" style="left:1277px;top:253px;width:32px;height:18px;line-height:16px;padding-left:2px;"><span class="l">3</span></div>
<div class="btn" style="left:1318px;top:251px;width:58px;height:21px;line-height:21px;padding-top:1px;">开始监控</div>
<div class="t" style="left:871px;top:278.5px;">只采集文章点赞<span class="g">≥</span></div>
<div class="inp" style="left:979px;top:275px;width:35px;height:23px;line-height:21px;padding-left:2px;"></div>
<div class="t" style="left:1022px;top:276.5px;">只采集文章评论<span class="g">≥</span></div>
<div class="inp" style="left:1130px;top:273px;width:35px;height:23px;line-height:21px;padding-left:2px;"></div>
<div class="t" style="left:1179px;top:284px;">只采集文章发布日期是<span class="l">:</span></div>
<div class="inp" style="left:1315px;top:281px;width:104px;height:20px;line-height:18px;padding-left:2px;"></div>
<div class="cb" style="left:873px;top:306px"></div>
<div class="t" style="left:889px;top:305.5px;">文章点赞</div>
<div class="cb" style="left:953px;top:306px"></div>
<div class="t" style="left:968px;top:305.5px;">文章收藏</div>
<div class="btn" style="left:1035px;top:301px;width:62px;height:21px;line-height:21px;padding-top:1px;">开始执行</div>
<div class="t r" style="left:1300px;top:305.5px;">日期格式<span class="l">: 2023-08-12</span></div>
<div class="a" style="left:859px;top:339px;width:579px;height:452px;box-sizing:border-box;border:1px solid #dcdcdc"></div>
<div class="a" style="left:865px;top:332px;width:88px;height:14px;background:#f0f0f0"></div>
<div class="t" style="left:867px;top:331.5px;">评论区用户信息</div>
<div class="btn" style="left:866px;top:350px;width:120px;height:28px;line-height:28px;padding-top:1px;">设置评论关键词采集</div>
<div class="btn" style="left:1000px;top:350px;width:138px;height:28px;line-height:28px;padding-top:1px;">设置关键词屏蔽不采集</div>
<div class="t" style="left:1155px;top:353.5px;">采集</div>
<div class="inp" style="left:1193px;top:353px;width:32px;height:18px;line-height:16px;padding-left:2px;"><span class="l">2400</span></div>
<div class="t" style="left:1231px;top:353.5px;">分钟后的评论</div>
<div class="btn" style="left:1325px;top:349px;width:86px;height:22px;line-height:22px;padding-top:1px;">设置采集地区</div>
<div class="t" style="left:1153px;top:382.5px;">只采集性别<span class="l">:</span></div>
<div class="cb" style="left:1227px;top:383.5px"></div>
<div class="t" style="left:1242px;top:382.5px;">男</div>
<div class="cb" style="left:1266px;top:383.5px"></div>
<div class="t" style="left:1282px;top:382.5px;">女</div>
<div class="t" style="left:1309px;top:382.5px;">年龄<span class="g">≥</span></div>
<div class="inp" style="left:1355px;top:380px;width:34px;height:19px;line-height:17px;padding-left:2px;"></div>
<div class="t r" style="left:868px;top:405.5px;">一定要在软件内登陆红薯，不然是无法采集和关注的！！！</div>
<div class="t r" style="left:1205px;top:405.5px;">年龄筛选很鸡肋，不建议开启</div>
<div class="lv" style="left:866px;top:430px;width:567px;height:292px"></div>
<div class="vl" style="left:918px;top:431px;height:272px"></div>
<div class="vl" style="left:967px;top:431px;height:272px"></div>
<div class="vl" style="left:1017px;top:431px;height:272px"></div>
<div class="vl" style="left:1067px;top:431px;height:272px"></div>
<div class="vl" style="left:1117px;top:431px;height:272px"></div>
<div class="vl" style="left:1161px;top:431px;height:272px"></div>
<div class="vl" style="left:1203px;top:431px;height:272px"></div>
<div class="vl" style="left:1295px;top:431px;height:272px"></div>
<div class="vl" style="left:1355px;top:431px;height:272px"></div>
<div class="hl" style="left:867px;top:455px;width:545px"></div>
<div class="hl" style="left:867px;top:471px;width:545px"></div>
<div class="hl" style="left:867px;top:487px;width:545px"></div>
<div class="hl" style="left:867px;top:503px;width:545px"></div>
<div class="hl" style="left:867px;top:519px;width:545px"></div>
<div class="hl" style="left:867px;top:535px;width:545px"></div>
<div class="hl" style="left:867px;top:551px;width:545px"></div>
<div class="hl" style="left:867px;top:567px;width:545px"></div>
<div class="hl" style="left:867px;top:583px;width:545px"></div>
<div class="hl" style="left:867px;top:599px;width:545px"></div>
<div class="hl" style="left:867px;top:615px;width:545px"></div>
<div class="hl" style="left:867px;top:631px;width:545px"></div>
<div class="hl" style="left:867px;top:647px;width:545px"></div>
<div class="hl" style="left:867px;top:663px;width:545px"></div>
<div class="hl" style="left:867px;top:679px;width:545px"></div>
<div class="hl" style="left:867px;top:695px;width:545px"></div>
<div class="t" style="left:874px;top:436.5px;">序号</div>
<div class="t" style="left:923px;top:436.5px;">昵称</div>
<div class="t" style="left:973px;top:436.5px;">红书号</div>
<div class="t" style="left:1023px;top:436.5px;"><span class="l">ip</span>地址</div>
<div class="t" style="left:1073px;top:436.5px;"><span class="l">uid</span></div>
<div class="t" style="left:1123px;top:436.5px;">关注</div>
<div class="t" style="left:1167px;top:436.5px;">粉丝</div>
<div class="t" style="left:1209px;top:436.5px;">评论时间</div>
<div class="t" style="left:1301px;top:436.5px;">评论内容</div>
<div class="t" style="left:1361px;top:436.5px;">状态</div>
<div class="a" style="left:867px;top:431px;width:545px;height:272px;overflow:hidden">
<div class="cb" style="left:5px;top:26px"></div>
<div class="t" style="left:23px;top:25px;"><span class="l">1</span></div>
<div class="t" style="left:56px;top:25px;">今<span class="l">...</span></div>
<div class="t" style="left:106px;top:25px;"><span class="l">101...</span></div>
<div class="t" style="left:156px;top:25px;">四川</div>
<div class="t" style="left:206px;top:25px;"><span class="l">5f8...</span></div>
<div class="t" style="left:256px;top:25px;"><span class="l">529</span></div>
<div class="t" style="left:300px;top:25px;"><span class="l">98</span></div>
<div class="t" style="left:342px;top:25px;"><span class="l">2023-11-14...</span></div>
<div class="t" style="left:434px;top:25px;"><span class="l">@momo...</span></div>
<div class="t" style="left:494px;top:25px;">关注成功</div>
<div class="cb" style="left:5px;top:42px"></div>
<div class="t" style="left:23px;top:41px;"><span class="l">2</span></div>
<div class="t" style="left:56px;top:41px;">南<span class="l">...</span></div>
<div class="t" style="left:106px;top:41px;"><span class="l">771...</span></div>
<div class="t" style="left:156px;top:41px;">福建</div>
<div class="t" style="left:206px;top:41px;"><span class="l">650...</span></div>
<div class="t" style="left:256px;top:41px;"><span class="l">24</span></div>
<div class="t" style="left:300px;top:41px;"><span class="l">5</span></div>
<div class="t" style="left:342px;top:41px;"><span class="l">2023-11-14...</span></div>
<div class="t" style="left:434px;top:41px;">懂了</div>
<div class="t" style="left:494px;top:41px;">关注成功</div>
<div class="cb" style="left:5px;top:58px"></div>
<div class="t" style="left:23px;top:57px;"><span class="l">3</span></div>
<div class="t" style="left:56px;top:57px;">晓柯</div>
<div class="t" style="left:106px;top:57px;"><span class="l">234...</span></div>
<div class="t" style="left:156px;top:57px;">贵州</div>
<div class="t" style="left:206px;top:57px;"><span class="l">654...</span></div>
<div class="t" style="left:256px;top:57px;"><span class="l">8</span></div>
<div class="t" style="left:300px;top:57px;"><span class="l">11</span></div>
<div class="t" style="left:342px;top:57px;"><span class="l">2023-11-13...</span></div>
<div class="t" style="left:434px;top:57px;">坐在<span class="l">...</span></div>
<div class="t" style="left:494px;top:57px;">关注成功</div>
<div class="cb" style="left:5px;top:74px"></div>
<div class="t" style="left:23px;top:73px;"><span class="l">4</span></div>
<div class="t" style="left:56px;top:73px;">为<span class="l">...</span></div>
<div class="t" style="left:106px;top:73px;"><span class="l">116...</span></div>
<div class="t" style="left:156px;top:73px;">广东</div>
<div class="t" style="left:206px;top:73px;"><span class="l">606...</span></div>
<div class="t" style="left:256px;top:73px;"><span class="l">42</span></div>
<div class="t" style="left:300px;top:73px;"><span class="l">39</span></div>
<div class="t" style="left:342px;top:73px;"><span class="l">2023-11-13...</span></div>
<div class="t" style="left:434px;top:73px;">去唱<span class="l">...</span></div>
<div class="t" style="left:494px;top:73px;">关注成功</div>
<div class="cb" style="left:5px;top:90px"></div>
<div class="t" style="left:23px;top:89px;"><span class="l">5</span></div>
<div class="t" style="left:56px;top:89px;">郭不卷</div>
<div class="t" style="left:106px;top:89px;"><span class="l">gbj...</span></div>
<div class="t" style="left:156px;top:89px;">江苏</div>
<div class="t" style="left:206px;top:89px;"><span class="l">64d...</span></div>
<div class="t" style="left:256px;top:89px;"><span class="l">30</span></div>
<div class="t" style="left:300px;top:89px;"><span class="l">3</span></div>
<div class="t" style="left:342px;top:89px;"><span class="l">2023-11-13...</span></div>
<div class="t" style="left:434px;top:89px;">以下<span class="l">...</span></div>
<div class="t" style="left:494px;top:89px;">关注成功</div>
<div class="cb" style="left:5px;top:106px"></div>
<div class="t" style="left:23px;top:105px;"><span class="l">6</span></div>
<div class="t" style="left:56px;top:105px;"><span class="l">kkecho</span></div>
<div class="t" style="left:106px;top:105px;"><span class="l">616...</span></div>
<div class="t" style="left:156px;top:105px;">广西</div>
<div class="t" style="left:206px;top:105px;"><span class="l">641...</span></div>
<div class="t" style="left:256px;top:105px;"><span class="l">0</span></div>
<div class="t" style="left:300px;top:105px;"><span class="l">0</span></div>
<div class="t" style="left:342px;top:105px;"><span class="l">2023-11-13...</span></div>
<div class="t" style="left:434px;top:105px;">为什<span class="l">...</span></div>
<div class="t" style="left:494px;top:105px;">关注成功</div>
<div class="cb" style="left:5px;top:122px"></div>
<div class="t" style="left:23px;top:121px;"><span class="l">7</span></div>
<div class="t" style="left:56px;top:121px;">小<span class="l">...</span></div>
<div class="t" style="left:106px;top:121px;"><span class="l">584...</span></div>
<div class="t" style="left:156px;top:121px;">广东</div>
<div class="t" style="left:206px;top:121px;"><span class="l">650...</span></div>
<div class="t" style="left:256px;top:121px;"><span class="l">11</span></div>
<div class="t" style="left:300px;top:121px;"><span class="l">0</span></div>
<div class="t" style="left:342px;top:121px;"><span class="l">2023-11-13...</span></div>
<div class="t" style="left:434px;top:121px;"><span class="l">[</span>石化<span class="l">...</span></div>
<div class="t" style="left:494px;top:121px;">关注成功</div>
<div class="cb" style="left:5px;top:138px"></div>
<div class="t" style="left:23px;top:137px;"><span class="l">8</span></div>
<div class="t" style="left:56px;top:137px;">奶<span class="l">...</span></div>
<div class="t" style="left:106px;top:137px;"><span class="l">966...</span></div>
<div class="t" style="left:156px;top:137px;">内蒙古</div>
<div class="t" style="left:206px;top:137px;"><span class="l">64b...</span></div>
<div class="t" style="left:256px;top:137px;"><span class="l">26</span></div>
<div class="t" style="left:300px;top:137px;"><span class="l">4</span></div>
<div class="t" style="left:342px;top:137px;"><span class="l">2023-11-14...</span></div>
<div class="t" style="left:434px;top:137px;">请问<span class="l">...</span></div>
<div class="t" style="left:494px;top:137px;">关注成功</div>
<div class="cb" style="left:5px;top:154px"></div>
<div class="t" style="left:23px;top:153px;"><span class="l">9</span></div>
<div class="t" style="left:56px;top:153px;">小<span class="l">...</span></div>
<div class="t" style="left:106px;top:153px;"><span class="l">876...</span></div>
<div class="t" style="left:156px;top:153px;">吉林</div>
<div class="t" style="left:206px;top:153px;"><span class="l">655...</span></div>
<div class="t" style="left:256px;top:153px;"><span class="l">13</span></div>
<div class="t" style="left:300px;top:153px;"><span class="l">0</span></div>
<div class="t" style="left:342px;top:153px;"><span class="l">2023-11-13...</span></div>
<div class="t" style="left:434px;top:153px;">认为<span class="l">...</span></div>
<div class="t" style="left:494px;top:153px;">关注成功</div>
<div class="cb" style="left:5px;top:170px"></div>
<div class="t" style="left:23px;top:169px;"><span class="l">10</span></div>
<div class="t" style="left:56px;top:169px;">长<span class="l">...</span></div>
<div class="t" style="left:106px;top:169px;"><span class="l">632...</span></div>
<div class="t" style="left:156px;top:169px;">陕西</div>
<div class="t" style="left:206px;top:169px;"><span class="l">619...</span></div>
<div class="t" style="left:256px;top:169px;"><span class="l">190</span></div>
<div class="t" style="left:300px;top:169px;"><span class="l">2</span></div>
<div class="t" style="left:342px;top:169px;"><span class="l">2023-11-13...</span></div>
<div class="t" style="left:434px;top:169px;">后续<span class="l">...</span></div>
<div class="t" style="left:494px;top:169px;">关注成功</div>
<div class="cb" style="left:5px;top:186px"></div>
<div class="t" style="left:23px;top:185px;"><span class="l">11</span></div>
<div class="t" style="left:56px;top:185px;"><span class="l">??...</span></div>
<div class="t" style="left:106px;top:185px;"><span class="l">967...</span></div>
<div class="t" style="left:156px;top:185px;">河北</div>
<div class="t" style="left:206px;top:185px;"><span class="l">645...</span></div>
<div class="t" style="left:256px;top:185px;"><span class="l">3</span></div>
<div class="t" style="left:300px;top:185px;"><span class="l">0</span></div>
<div class="t" style="left:342px;top:185px;"><span class="l">2023-11-13...</span></div>
<div class="t" style="left:434px;top:185px;"><span class="l">[</span>哭惹<span class="l">...</span></div>
<div class="t" style="left:494px;top:185px;">关注成功</div>
<div class="cb" style="left:5px;top:202px"></div>
<div class="t" style="left:23px;top:201px;"><span class="l">12</span></div>
<div class="t" style="left:56px;top:201px;"><span class="l">Syr</span></div>
<div class="t" style="left:106px;top:201px;"><span class="l">718...</span></div>
<div class="t" style="left:156px;top:201px;">陕西</div>
<div class="t" style="left:206px;top:201px;"><span class="l">5e8...</span></div>
<div class="t" style="left:256px;top:201px;"><span class="l">189</span></div>
<div class="t" style="left:300px;top:201px;"><span class="l">18</span></div>
<div class="t" style="left:342px;top:201px;"><span class="l">2023-11-13...</span></div>
<div class="t" style="left:434px;top:201px;">倒过<span class="l">...</span></div>
<div class="t" style="left:494px;top:201px;">关注成功</div>
<div class="cb" style="left:5px;top:218px"></div>
<div class="t" style="left:23px;top:217px;"><span class="l">13</span></div>
<div class="t" style="left:56px;top:217px;"><span class="l">????</span></div>
<div class="t" style="left:106px;top:217px;"><span class="l">676...</span></div>
<div class="t" style="left:156px;top:217px;">辽宁</div>
<div class="t" style="left:206px;top:217px;"><span class="l">5c2...</span></div>
<div class="t" style="left:256px;top:217px;"><span class="l">75</span></div>
<div class="t" style="left:300px;top:217px;"><span class="l">5</span></div>
<div class="t" style="left:342px;top:217px;"><span class="l">2023-11-13...</span></div>
<div class="t" style="left:434px;top:217px;">年少归玫</div>
<div class="t" style="left:494px;top:217px;">关注成功</div>
<div class="cb" style="left:5px;top:234px"></div>
<div class="t" style="left:23px;top:233px;"><span class="l">14</span></div>
<div class="t" style="left:56px;top:233px;">长安</div>
<div class="t" style="left:106px;top:233px;"><span class="l">252...</span></div>
<div class="t" style="left:156px;top:233px;">广西</div>
<div class="t" style="left:206px;top:233px;"><span class="l">5e9...</span></div>
<div class="t" style="left:256px;top:233px;"><span class="l">10</span></div>
<div class="t" style="left:300px;top:233px;"><span class="l">1</span></div>
<div class="t" style="left:342px;top:233px;"><span class="l">2023-11-13...</span></div>
<div class="t" style="left:434px;top:233px;">哇塞<span class="l">...</span></div>
<div class="t" style="left:494px;top:233px;">关注成功</div>
<div class="cb" style="left:5px;top:250px"></div>
<div class="t" style="left:23px;top:249px;"><span class="l">15</span></div>
<div class="t" style="left:56px;top:249px;">洛瑶</div>
<div class="t" style="left:106px;top:249px;"><span class="l">703...</span></div>
<div class="t" style="left:156px;top:249px;">山东</div>
<div class="t" style="left:206px;top:249px;"><span class="l">5dd...</span></div>
<div class="t" style="left:256px;top:249px;"><span class="l">1391</span></div>
<div class="t" style="left:300px;top:249px;"><span class="l">51</span></div>
<div class="t" style="left:342px;top:249px;"><span class="l">2023-11-13...</span></div>
<div class="t" style="left:434px;top:249px;">听不<span class="l">...</span></div>
<div class="t" style="left:494px;top:249px;">关注成功</div>
<div class="cb" style="left:5px;top:266px"></div>
<div class="t" style="left:23px;top:265px;"><span class="l">16</span></div>
<div class="t" style="left:56px;top:265px;">司<span class="l">...</span></div>
<div class="t" style="left:106px;top:265px;"><span class="l">588...</span></div>
<div class="t" style="left:156px;top:265px;">海南</div>
<div class="t" style="left:206px;top:265px;"><span class="l">63d...</span></div>
<div class="t" style="left:256px;top:265px;"><span class="l">39</span></div>
<div class="t" style="left:300px;top:265px;"><span class="l">34</span></div>
<div class="t" style="left:342px;top:265px;"><span class="l">2023-11-13...</span></div>
<div class="t" style="left:434px;top:265px;">感觉<span class="l">...</span></div>
<div class="t" style="left:494px;top:265px;">关注成功</div>
</div>
<div class="a" style="left:1412px;top:431px;width:20px;height:272px;background:#f0f0f0"></div>
<div class="a" style="left:1414px;top:449px;width:16px;height:187px;background:#cdcdcd"></div>
<svg class="a" style="left:1416px;top:436px" width="12" height="8" viewBox="0 0 12 8"><path d="M1.500 6.500 6 2l4.500 4.500" fill="none" stroke="#555" stroke-width="1.600"/></svg>
<svg class="a" style="left:1416px;top:691px" width="12" height="8" viewBox="0 0 12 8"><path d="M1.500 1.500 6 6l4.500-4.500" fill="none" stroke="#555" stroke-width="1.600"/></svg>
<div class="a" style="left:867px;top:703px;width:565px;height:18px;background:#f0f0f0"></div>
<div class="a" style="left:884px;top:704px;width:500px;height:16px;background:#cdcdcd"></div>
<svg class="a" style="left:872px;top:706px" width="8" height="12" viewBox="0 0 8 12"><path d="M6.500 1.500 2 6l4.500 4.500" fill="none" stroke="#555" stroke-width="1.600"/></svg>
<svg class="a" style="left:1401px;top:706px" width="8" height="12" viewBox="0 0 8 12"><path d="M1.500 1.500 6 6l-4.500 4.500" fill="none" stroke="#555" stroke-width="1.600"/></svg>
<div class="btn" style="left:1236px;top:730px;width:64px;height:21px;line-height:21px;padding-top:1px;">导出表格</div>
<div class="btn" style="left:1311px;top:730px;width:39px;height:21px;line-height:21px;padding-top:1px;">全选</div>
<div class="btn" style="left:1365px;top:726px;width:54px;height:26px;line-height:26px;padding-top:1px;">开始关注</div>
<div class="cb" style="left:869px;top:744.5px"></div>
<div class="t" style="left:884px;top:743.5px;">只采集用户<span class="l">uid</span></div>
<div class="cb" style="left:869px;top:768.5px"></div>
<div class="t" style="left:884px;top:768px;">评论采集开关</div>
<div class="cb" style="left:1110px;top:764px"><svg class="a" style="left:0;top:0" width="11" height="11" viewBox="0 0 11 11"><path d="M2 5.5 4.5 8 9 2.5" fill="none" stroke="#000" stroke-width="1.3"/></svg></div>
<div class="t" style="left:1126px;top:763.5px;">实时关注</div>
<div class="t" style="left:1188px;top:763px;">关注间隔时间（秒）<span class="l">:</span></div>
<div class="inp" style="left:1313px;top:759px;width:37px;height:23px;line-height:21px;padding-left:2px;"><span class="l">5</span></div>
<div class="t" style="left:1356px;top:760.5px;"><span class="l">-</span></div>
<div class="inp" style="left:1366px;top:759px;width:32px;height:23px;line-height:21px;padding-left:2px;"><span class="l">8</span></div>
<div class="win" style="left:1450px;top:8px;width:480px;height:436px"></div>
<div class="a" style="left:1450px;top:8px;width:480px;height:26px;background:#fff"></div>
<svg class="a" style="left:1455px;top:12.5px" width="16" height="16" viewBox="0 0 16 16"><rect x=".4" y=".4" width="15.2" height="15.2" rx="2.2" fill="#1b7e7c" stroke="#3d9a96" stroke-width=".8"/><rect x="2" y="2.3" width="11.6" height="3.1" rx=".8" fill="none" stroke="#dcfcf8" stroke-width="1.45"/><path d="M1.6 7.4h12.2v5.6" fill="none" stroke="#dcfcf8" stroke-width="1.4"/><path d="M7.6 7.8 1.5 11.4M11.4 7.8 2.2 13.7M13.6 9.5 6.4 14" fill="none" stroke="#dcfcf8" stroke-width="1.6"/></svg>
<div class="s" style="left:1476px;top:12.5px;color:#ababab;font-size:12px">红薯实时关注-浏览器连接成功</div>
<div class="a" style="left:1820px;top:21px;width:10px;height:1px;background:#a9a9a9"></div>
<div class="a" style="left:1864px;top:16px;width:10px;height:10px;box-sizing:border-box;border:1px solid #e3e3e3"></div>
<svg class="a" style="left:1909px;top:15px" width="12" height="12" viewBox="0 0 12 12"><path d="M.500.500l11 11M11.500.500l-11 11" stroke="#9a9a9a" stroke-width="1"/></svg>
<div class="t" style="left:1457px;top:44.5px;">浏览器路径<span class="l">:</span></div>
<div class="inp" style="left:1535px;top:41px;width:308px;height:24px;line-height:22px;padding-left:2px;"></div>
<div class="m" style="left:1537px;top:47.5px;line-height:12px;">C:\Program Files\Google\Chrome\Application\chrome.e</div>
<div class="btn" style="left:1855px;top:41px;width:70px;height:22px;line-height:22px;padding-top:1px;text-align:left;padding-left:3px">启动浏览器</div>
<div class="t r" style="left:1478px;top:78px;">非谷歌浏览器，请补全浏览器路径<span class="l">&gt;</span>谷歌浏览器<span class="l"> </span>可以直接启动浏览器</div>
<div class="t" style="left:1457px;top:119.5px;">红薯<span class="l">ck:</span></div>
<div class="lv" style="left:1508px;top:112px;width:336px;height:114px;border-color:#7a7a7a"></div>
<div class="m" style="left:1510px;top:114.5px;line-height:12px;">1699958655;gid=yYDSfK22KiiKyYDSfK24D4EJdj2WEyDx8kfTv</div>
<div class="m" style="left:1510px;top:126.5px;line-height:12px;">C14FvIMxW287iEAWf888qJ28jJ8i8iKf82J;Domain=.xiaohong</div>
<div class="m" style="left:1510px;top:138.5px;line-height:12px;">shu.com;Path=/;Expires=3171186979;cache_feeds=</div>
<div class="m" style="left:1510px;top:150.5px;line-height:12px;">[];Domain=www.xiaohongshu.com;Path=/;web_session=040</div>
<div class="m" style="left:1510px;top:162.5px;line-height:12px;">0698fa5096d5601b15a0566374b6044f150;Domain=.xiaohong</div>
<div class="m" style="left:1510px;top:174.5px;line-height:12px;">shu.com;Path=/;HttpOnly;Expires=1731494066;unread=</div>
<div class="m" style="left:1510px;top:186.5px;line-height:12px;">{%22ub%22:%22654edb000000000032031d78%22%2C%22ue</div>
<div class="m" style="left:1510px;top:198.5px;line-height:12px;">%22:%226543d38c0000000023038840%22%2C%22uc</div>
<div class="m" style="left:1510px;top:210.5px;line-height:12px;">%22:21};Domain=.xiaohongshu.com;Path=/;</div>
<div class="a" style="left:1826px;top:113px;width:17px;height:112px;background:#f0f0f0"></div>
<div class="a" style="left:1827px;top:175px;width:15px;height:31px;background:#cdcdcd"></div>
<svg class="a" style="left:1829px;top:119px" width="11" height="8" viewBox="0 0 11 8"><path d="M1.500 6 5.500 2l4 4" fill="none" stroke="#555" stroke-width="1.500"/></svg>
<svg class="a" style="left:1829px;top:211px" width="11" height="8" viewBox="0 0 11 8"><path d="M1.500 2 5.500 6l4-4" fill="none" stroke="#555" stroke-width="1.500"/></svg>
<div class="btn" style="left:1858px;top:146px;width:67px;height:22px;line-height:22px;padding-top:1px;text-align:left;padding-left:16px">置入<span class="l">ck</span></div>
<div class="t" style="left:1475px;top:232.5px;">操作间隔时间（秒）<span class="l">:</span></div>
<div class="inp" style="left:1619px;top:231px;width:40px;height:19px;line-height:17px;padding-left:2px;"><span class="l">5</span></div>
<div class="t" style="left:1668px;top:230.5px;"><span class="l">-</span></div>
<div class="inp" style="left:1682px;top:231px;width:40px;height:19px;line-height:17px;padding-left:2px;"><span class="l">8</span></div>
<div class="lv" style="left:1463px;top:260px;width:470px;height:168px;border-color:#7a7a7a"></div>
<div class="m" style="left:1465px;top:262px;line-height:12px;">2023-11-14 18:35:19 6|65012f3e0000000004025332</div>
<div class="m" style="left:1465px;top:274px;line-height:12px;">2023-11-14 18:36:34 7|64bdce1e000000001403aa8c</div>
<div class="m" style="left:1465px;top:286px;line-height:12px;">2023-11-14 18:36:41 8|6550ade5000000000802c3d2</div>
<div class="m" style="left:1465px;top:298px;line-height:12px;">2023-11-14 18:36:55 9|6194fe430000000100040b3</div>
<div class="m" style="left:1465px;top:310px;line-height:12px;">2023-11-14 18:36:55 10|645105c7000000001400e6b2</div>
<div class="m" style="left:1465px;top:322px;line-height:12px;">2023-11-14 18:36:56 11|5e8d9eb200000000010092e5</div>
<div class="m" style="left:1465px;top:334px;line-height:12px;">2023-11-14 18:36:56 12|5c29f8410000000005022c2c</div>
<div class="m" style="left:1465px;top:346px;line-height:12px;">2023-11-14 18:36:56 13|5e97ad1d0000000001005ab8</div>
<div class="m" style="left:1465px;top:358px;line-height:12px;">2023-11-14 18:36:57 14|5dd689d10000000001001266</div>
<div class="m" style="left:1465px;top:370px;line-height:12px;">2023-11-14 18:36:58 15|63db3dcc00000000260053d9</div>
<div class="m" style="left:1465px;top:382px;line-height:12px;">2023-11-14 18:36:59 16|5ece22d2000000000101c0e9</div>
<div class="m" style="left:1465px;top:394px;line-height:12px;">2023-11-14 18:36:59 17|5daecff2000000001007cf5</div>
<div class="m" style="left:1465px;top:406px;line-height:12px;">2023-11-14 18:36:59 18|65502ce10000000002011259</div>
<div class="a" style="left:1902px;top:261px;width:17px;height:166px;background:#f0f0f0"></div>
<div class="a" style="left:1903px;top:324px;width:15px;height:83px;background:#cdcdcd"></div>
<svg class="a" style="left:1905px;top:267px" width="11" height="8" viewBox="0 0 11 8"><path d="M1.500 6 5.500 2l4 4" fill="none" stroke="#555" stroke-width="1.500"/></svg>
<svg class="a" style="left:1905px;top:414px" width="11" height="8" viewBox="0 0 11 8"><path d="M1.500 2 5.500 6l4-4" fill="none" stroke="#555" stroke-width="1.500"/></svg>
<div class="win" style="left:448px;top:169px;width:404px;height:345px;box-sizing:border-box;border:1px solid #6e6e6e;box-shadow:0 2px 12px rgba(0,0,0,.35)"></div>
<div class="a" style="left:449px;top:170px;width:402px;height:25px;background:#fff"></div>
<svg class="a" style="left:452px;top:173.5px" width="16" height="16" viewBox="0 0 16 16"><rect x=".4" y=".4" width="15.2" height="15.2" rx="2.2" fill="#1b7e7c" stroke="#3d9a96" stroke-width=".8"/><rect x="2" y="2.3" width="11.6" height="3.1" rx=".8" fill="none" stroke="#dcfcf8" stroke-width="1.45"/><path d="M1.6 7.4h12.2v5.6" fill="none" stroke="#dcfcf8" stroke-width="1.4"/><path d="M7.6 7.8 1.5 11.4M11.4 7.8 2.2 13.7M13.6 9.5 6.4 14" fill="none" stroke="#dcfcf8" stroke-width="1.6"/></svg>
<div class="s" style="left:473px;top:173.5px;color:#111;font-size:12px">作者监控列表</div>
<div class="a" style="left:732px;top:182px;width:11px;height:1px;background:#222"></div>
<div class="a" style="left:777px;top:177px;width:10px;height:10px;box-sizing:border-box;border:1px solid #cfcfcf"></div>
<svg class="a" style="left:822px;top:176px" width="12" height="12" viewBox="0 0 12 12"><path d="M.500.500l11 11M11.500.500l-11 11" stroke="#222" stroke-width="1.100"/></svg>
<div class="lv" style="left:455px;top:199px;width:194px;height:272px"></div>
<div class="vl" style="left:506px;top:200px;height:270px"></div>
<div class="vl" style="left:596px;top:200px;height:270px"></div>
<div class="hl" style="left:456px;top:224px;width:192px"></div>
<div class="hl" style="left:456px;top:240px;width:192px"></div>
<div class="hl" style="left:456px;top:256px;width:192px"></div>
<div class="hl" style="left:456px;top:272px;width:192px"></div>
<div class="hl" style="left:456px;top:288px;width:192px"></div>
<div class="hl" style="left:456px;top:304px;width:192px"></div>
<div class="hl" style="left:456px;top:320px;width:192px"></div>
<div class="hl" style="left:456px;top:336px;width:192px"></div>
<div class="hl" style="left:456px;top:352px;width:192px"></div>
<div class="hl" style="left:456px;top:368px;width:192px"></div>
<div class="hl" style="left:456px;top:384px;width:192px"></div>
<div class="hl" style="left:456px;top:400px;width:192px"></div>
<div class="hl" style="left:456px;top:416px;width:192px"></div>
<div class="hl" style="left:456px;top:432px;width:192px"></div>
<div class="hl" style="left:456px;top:448px;width:192px"></div>
<div class="hl" style="left:456px;top:464px;width:192px"></div>
<div class="t" style="left:462px;top:205.5px;">序号</div>
<div class="t" style="left:513px;top:205.5px;">作者昵称</div>
<div class="t" style="left:463px;top:225.5px;"><span class="l">1</span></div>
<div class="t" style="left:513px;top:225.5px;">川崎的绿</div>
<div class="t" style="left:463px;top:241.5px;"><span class="l">2</span></div>
<div class="t" style="left:513px;top:241.5px;">筱</div>
<div class="t" style="left:658px;top:206.5px;">鼠标右击列表，进行添加<span class="l">/</span>删除</div>
<div class="t" style="left:654px;top:241px;line-height:22px;font-size:15px;font-weight:900;color:#e00012;font-family:'Liberation Serif','Noto Serif CJK SC',serif;">监控作者新文章<span style="font-family:'Liberation Mono',monospace;font-size:13px;letter-spacing:-.3px">/</span>评论的话</div>
<div class="t" style="left:654px;top:268.5px;line-height:22px;font-size:15px;font-weight:900;color:#e00012;font-family:'Liberation Serif','Noto Serif CJK SC',serif;">这个窗口不要关闭<span style="font-family:'Liberation Mono',monospace;font-size:13px;letter-spacing:-.3px">!</span></div>
<div class="btn" style="left:660px;top:316px;width:70px;height:22px;line-height:22px;padding-top:1px;">监控作者</div>
<div class="t" style="left:656px;top:346.5px;">默认<span class="l">3</span>分钟一轮监控！！！</div>
<div class="t" style="left:656px;top:370.5px;">且<span class="l"> </span>文章也是默认去重</div>
<div class="t" style="left:656px;top:394.5px;">当天采集过的不会显示</div>
<div class="btn" style="left:455px;top:480px;width:104px;height:22px;line-height:22px;padding-top:1px;">获取列表作者文章</div>
<div class="a" style="left:1180px;top:418px;width:117px;height:304px;box-sizing:border-box;border:9px solid #fb0606"></div>
<div class="a" style="left:0;top:1026px;width:1917px;height:40px;background:linear-gradient(90deg,#1f3440 0%,#1f323f 45%,#1e2c3b 75%,#1d2838 100%)"></div>
<svg class="a" style="left:16px;top:1038px" width="17" height="17" viewBox="0 0 17 17"><path d="M0 2.4 7 1.4v6.8H0zM8 1.25 17 0v8.2H8zM0 9.1h7v6.8L0 14.9zM8 9.1h9V17l-9-1.25z" fill="#fff"/></svg>
<div class="a" style="left:48px;top:1026px;width:288px;height:40px;background:#f3f3f3"></div>
<svg class="a" style="left:59px;top:1037px" width="19" height="19" viewBox="0 0 19 19"><circle cx="11.5" cy="7.5" r="5.2" fill="none" stroke="#222" stroke-width="1.5"/><path d="M7.6 11.4 1.5 17.5" stroke="#222" stroke-width="1.6"/></svg>
<div class="s" style="left:88px;top:1037px;line-height:20px;font-size:14px;color:#333">搜索</div>
<svg class="a" style="left:258px;top:1027px" width="78" height="39" viewBox="0 0 78 39"><g transform="rotate(-21 31 17)"><rect x="4" y="9.500" width="56" height="15" rx="4" fill="#c3bba6"/><rect x="4" y="9.500" width="56" height="5" rx="3" fill="#d4cdb9"/><rect x="27" y="8.500" width="4" height="17" fill="#8c846f"/><rect x="33" y="8.500" width="2.500" height="17" fill="#a0987f"/><rect x="37" y="12.500" width="13" height="7" fill="#efede6"/><ellipse cx="5" cy="17" rx="3.500" ry="7.500" fill="#7b7361"/><ellipse cx="5" cy="17" rx="1.600" ry="4" fill="#4d473b"/></g><path d="M38 27.500 72 17" stroke="#c9733c" stroke-width="2.200" fill="none"/><path d="M17 34.500c5-4 12-6.500 22-7.800l1 2.600c-8 3-15 4.800-23 5.200z" fill="#1f1713"/><path d="M40 27l4-1.200.8 2.400-4 1.300z" fill="#6a3320"/><path d="M72 17c3-1 5-4 3.500-7-1-1.500-3-.5-2.500 1.500" stroke="#555" stroke-width="1" fill="none"/></svg>
<svg class="a" style="left:351px;top:1037px" width="20" height="18" viewBox="0 0 20 18"><path d="M1 1h10M1 17h10M3 5h8v8H3z M14 1v3M14 6v6M14 14v3M18 5v2M18 11v2" fill="none" stroke="#fff" stroke-width="1.4"/></svg>
<svg class="a" style="left:397px;top:1032.5px" width="27" height="27" viewBox="0 0 28 28"><defs><linearGradient id="eg" x1="0" y1="0" x2="1" y2="1"><stop offset="0" stop-color="#35c1f1"/><stop offset="1" stop-color="#1b6fd0"/></linearGradient></defs><circle cx="14" cy="14" r="12.5" fill="url(#eg)"/><path d="M3 17c0-8 6-12 12-12 6 0 10 4 10 8 0 3-2 5-5 5-2 0-3-1-3-2 0-2-2-4-5-4-4 0-7 3-7 7 0 3 2 6 5 7-6-1-12-4-12-9z" fill="#4fe07f" opacity=".75"/><path d="M9 16c0 5 4 9 10 8 3-1 5-2 6-4-6 3-12 0-12-5 0-1 0-2 1-3-3 0-5 2-5 4z" fill="#0c4fa8"/></svg>
<svg class="a" style="left:446px;top:1032.5px" width="27" height="27" viewBox="0 0 28 28"><path d="M2 6h9l2 2h13v3H2z" fill="#e9a825"/><rect x="2" y="9" width="24" height="15" rx="1" fill="#fcd353"/><path d="M7 24v-7h14v7h-3.5v-4h-7v4z" fill="#3e9ae6"/></svg>
<svg class="a" style="left:494.5px;top:1032.5px" width="27" height="27" viewBox="0 0 28 28"><path d="M9 7c0-5 10-5 10 0" fill="none" stroke="#dfe7ef" stroke-width="1.8"/><rect x="3" y="7" width="22" height="19" rx="2.5" fill="#f4f6f8"/><rect x="9" y="11" width="4.5" height="4.5" fill="#f25022"/><rect x="14.5" y="11" width="4.5" height="4.5" fill="#7fba00"/><rect x="9" y="16.5" width="4.5" height="4.5" fill="#00a4ef"/><rect x="14.5" y="16.5" width="4.5" height="4.5" fill="#ffb900"/></svg>
<svg class="a" style="left:544px;top:1032.5px" width="27" height="27" viewBox="0 0 28 28"><path d="M2 10 14 3l12 7v14H2z" fill="#2b88d8"/><path d="M2 10l12 8 12-8v14H2z" fill="#5cb5f2"/><path d="M2 24l12-9 12 9z" fill="#9fd4fa"/></svg>
<svg class="a" style="left:593px;top:1032.5px" width="27" height="27" viewBox="0 0 28 28"><rect x="1" y="1" width="26" height="26" rx="8" fill="#1f8df0"/><circle cx="14" cy="14" r="8.6" fill="none" stroke="#fff" stroke-width="1.7"/><path d="M11 9v10M17.5 9l-6 5.2 6 4.8" fill="none" stroke="#fff" stroke-width="2" stroke-linecap="round" stroke-linejoin="round"/></svg>
<svg class="a" style="left:642px;top:1032.5px" width="27" height="27" viewBox="0 0 28 28"><circle cx="14" cy="14" r="12.5" fill="#fbc116"/><path d="M14 14 3.2 7.8A12.5 12.5 0 0 1 24.8 7.8z" fill="#e33b2e"/><path d="M14 14 3.2 7.8A12.5 12.5 0 0 0 14 26.5z" fill="#2da94f"/><path d="M14 14l-5 8.7L14 26.5z" fill="#2da94f"/><circle cx="14" cy="14" r="5.7" fill="#fff"/><circle cx="14" cy="14" r="4.5" fill="#4285f4"/></svg>
<svg class="a" style="left:691px;top:1032.5px" width="27" height="27" viewBox="0 0 28 28"><circle cx="14" cy="14" r="12.5" fill="#3aa0ee"/><path d="M6.5 14.5a7.6 7.6 0 0 1 15 0h-11c.2 3 4.5 4.5 7.2 1.8h3.3c-1.5 4-6 5.600-10 4-3-1.200-4.500-3.500-4.500-5.800zM10.500 12.500h7.200c-.4-3.200-6.600-3.400-7.200 0z" fill="#fff" fill-rule="evenodd"/><path d="M4 8c6-7 19-6 22 0" fill="none" stroke="#ffe27a" stroke-width="1.2" opacity=".0"/></svg>
<svg class="a" style="left:740px;top:1032.5px" width="27" height="27" viewBox="0 0 28 28"><rect x="1.500" y="1.500" width="25" height="25" rx="6" fill="#050505"/><path d="M15 6v11.500a3.300 3.300 0 1 1-3.300-3.300" fill="none" stroke="#25f4ee" stroke-width="2.800" transform="translate(-.8 -.6)"/><path d="M15 6v11.500a3.300 3.300 0 1 1-3.300-3.300" fill="none" stroke="#fe2c55" stroke-width="2.800" transform="translate(.8 .6)"/><path d="M15 6v11.500a3.300 3.300 0 1 1-3.300-3.300M15 6.500c.4 2.600 2 4 4.600 4.200" fill="none" stroke="#fff" stroke-width="2.600"/></svg>
<svg class="a" style="left:789px;top:1032.5px" width="27" height="27" viewBox="0 0 28 28"><ellipse cx="11" cy="11.500" rx="9.500" ry="8" fill="#51c332"/><path d="M5 17l-1.500 4 4.500-2.500z" fill="#51c332"/><ellipse cx="18.500" cy="17.500" rx="8" ry="6.700" fill="#f2f2f2"/><path d="M23 22.500l1.200 3.200-3.800-2z" fill="#f2f2f2"/><circle cx="8" cy="9.500" r="1.200" fill="#20333f"/><circle cx="14" cy="9.500" r="1.200" fill="#20333f"/><circle cx="16" cy="16" r="1" fill="#555"/><circle cx="21" cy="16" r="1" fill="#555"/></svg>
<svg class="a" style="left:838px;top:1032.5px" width="27" height="27" viewBox="0 0 28 28"><circle cx="14" cy="14" r="12.5" fill="#fbc116"/><path d="M14 14 3.2 7.8A12.5 12.5 0 0 1 24.8 7.8z" fill="#e33b2e"/><path d="M14 14 3.2 7.8A12.5 12.5 0 0 0 14 26.5z" fill="#2da94f"/><path d="M14 14l-5 8.7L14 26.5z" fill="#2da94f"/><circle cx="14" cy="14" r="5.7" fill="#fff"/><circle cx="14" cy="14" r="4.5" fill="#4285f4"/></svg>
<div class="a" style="left:390px;top:1064px;width:41px;height:2px;background:#76b9ed"></div>
<div class="a" style="left:440px;top:1064px;width:40px;height:2px;background:#76b9ed"></div>
<div class="a" style="left:783px;top:1064px;width:40px;height:2px;background:#76b9ed"></div>
<div class="a" style="left:832px;top:1064px;width:40px;height:2px;background:#76b9ed"></div>
<svg class="a" style="left:1461px;top:1033px" width="26" height="26" viewBox="0 0 26 26"><ellipse cx="13" cy="7" rx="10" ry="4.500" fill="#f4a522"/><ellipse cx="14" cy="12.500" rx="8" ry="3.800" fill="#f7b733"/><ellipse cx="12" cy="17" rx="6" ry="3" fill="#ee8f1c"/><path d="M9 24l3.500-4 3.500 4-3.500-1.500z" fill="#e4532e"/></svg>
<div class="s" style="left:1493px;top:1035.5px;line-height:20px;font-size:14.5px;color:#fff">CNY/KRW</div>
<div class="s" style="left:1571px;top:1035.5px;line-height:20px;font-size:14.5px;color:#e7687a">+0.62%</div>
<svg class="a" style="left:1645px;top:1041px" width="13" height="9" viewBox="0 0 13 9"><path d="M1 7.500 6.500 2 12 7.500" fill="none" stroke="#fff" stroke-width="1.300"/></svg>
<svg class="a" style="left:1667px;top:1039px" width="18" height="14" viewBox="0 0 18 14"><rect x="3" y="4" width="13" height="8" fill="none" stroke="#fff" stroke-width="1.200"/><rect x="5" y="6" width="9" height="4" fill="#fff"/><path d="M1.200 1v5M0 2.500h2.500M2.500 6v2h1" stroke="#fff" stroke-width="1" fill="none"/><rect x="16" y="6.500" width="1.500" height="3" fill="#fff"/></svg>
<svg class="a" style="left:1693px;top:1038px" width="17" height="16" viewBox="0 0 17 16"><path d="M2 14.500a12.500 12.500 0 0 1 12.500-12.500M5.500 14.500a9 9 0 0 1 9-9M9 14.500a5.500 5.500 0 0 1 5.500-5.500" fill="none" stroke="#fff" stroke-width="1.200"/><circle cx="13.500" cy="13.500" r="1.400" fill="#fff"/></svg>
<svg class="a" style="left:1715px;top:1038px" width="18" height="16" viewBox="0 0 18 16"><path d="M1 5.500h3l4-3.500v12l-4-3.500H1z" fill="none" stroke="#fff" stroke-width="1.100"/><path d="M10.500 5.500c1.300 1.300 1.300 3.700 0 5M12.800 3.500c2.400 2.400 2.400 6.600 0 9M15 1.800c3.200 3.400 3.200 9 0 12.400" fill="none" stroke="#fff" stroke-width="1.100"/></svg>
<div class="s" style="left:1740px;top:1035.5px;line-height:20px;font-size:15px;color:#fff;font-weight:700">中</div>
<div class="a" style="left:1768px;top:1038px;width:16px;height:16px;border-radius:4px;background:#2d8cf0"></div><svg class="a" style="left:1768px;top:1038px" width="16" height="16" viewBox="0 0 16 16"><path d="M4 4h8M4.500 8h7M4 12h8M6 4l4 8" stroke="#fff" stroke-width="1.500" fill="none"/></svg>
<div class="s" style="left:1790px;width:80px;text-align:center;top:1028.5px;color:#fff;font-size:13.5px">18:38</div>
<div class="s" style="left:1790px;width:80px;text-align:center;top:1047px;color:#fff;font-size:13.5px">2023/11/14</div>
<svg class="a" style="left:1879px;top:1036px" width="26" height="26" viewBox="0 0 26 26"><path d="M1.500 2h15v11h-9l-3 3v-3h-3z" fill="#fff"/><path d="M4 5.500h10M4 8h10M4 10.500h7" stroke="#20333f" stroke-width="1"/><circle cx="16.500" cy="17.500" r="7" fill="#20333f" stroke="#d8d8d8" stroke-width="1.100"/></svg>
<div class="s" style="left:1889px;width:13px;text-align:center;top:1045.5px;color:#fff;font-size:11.5px;font-weight:bold">1</div>
<div class="a" style="left:1914px;top:1026px;width:1px;height:40px;background:#3c4856"></div>
</body></html>
